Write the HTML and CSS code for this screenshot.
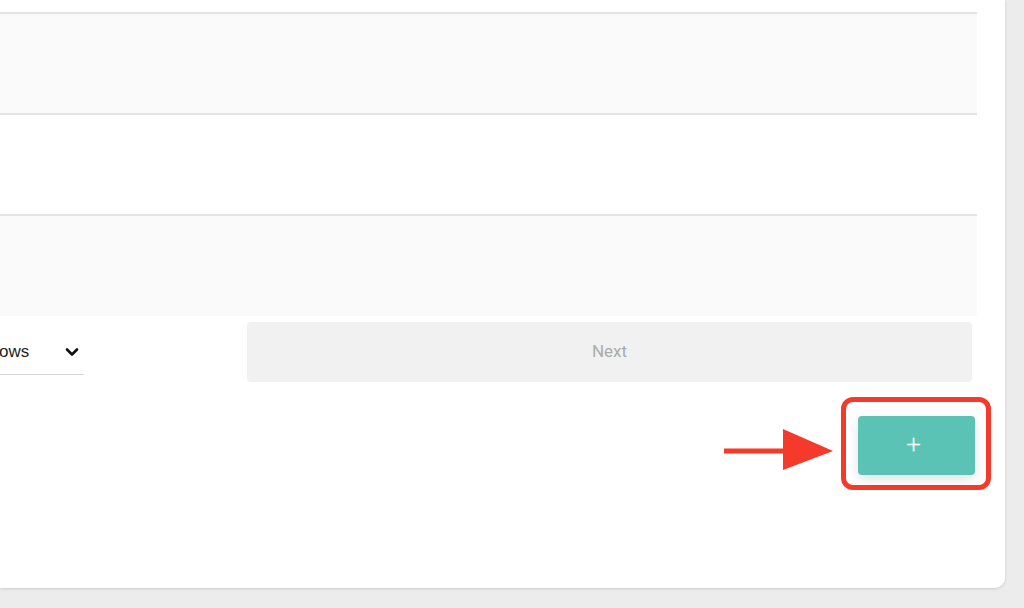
FILE: index.html
```html
<!DOCTYPE html>
<html lang="en">
<head>
<meta charset="utf-8">
<title>Table</title>
<link rel="stylesheet" href="styles.css">
</head>
<body>
<div class="card">
  <div class="table">
    <div class="row shaded"></div>
    <div class="row"></div>
    <div class="row shaded"></div>
  </div>
  <div class="pager">
    <div class="select">
      <span class="select-label">ows</span>
      <svg class="chev" width="14" height="10" viewBox="0 0 14 10"><path d="M2 2.5 L7 7.5 L12 2.5" fill="none" stroke="#111" stroke-width="2.6" stroke-linecap="round" stroke-linejoin="round"/></svg>
    </div>
    <button class="next">Next</button>
  </div>
  <div class="actions">
    <button class="add">+</button>
  </div>
</div>
<div class="highlight"></div>
<svg class="arrow" width="112" height="44" viewBox="0 0 112 44"><rect x="0" y="19.5" width="66" height="5" fill="#f5392b"/><polygon points="59,0 109,22 59,41" fill="#f5392b"/></svg>
</body>
</html>
```

FILE: styles.css
```css
html, body {
  margin: 0;
  padding: 0;
}
body {
  background: #ececec;
  width: 1024px;
  height: 608px;
  overflow: hidden;
  position: relative;
  font-family: Inter, "Noto Sans", sans-serif;
}
.card {
  width: 1005px;
  height: 588px;
  background: #fff;
  border-radius: 0 0 10px 0;
  box-shadow: 0 1px 3px rgba(0,0,0,0.14);
  overflow: hidden;
  display: flex;
  flex-direction: column;
}
.table {
  width: 977px;
  margin-top: 12px;
  display: flex;
  flex-direction: column;
}
.row {
  height: 99px;
  border-top: 2px solid #e3e3e3;
  background: #fff;
}
.row.shaded {
  background: #fafafa;
}
.row:last-child {
  height: 100px;
}
.pager {
  display: flex;
  align-items: center;
  margin-top: 6px;
}
.select {
  width: 84px;
  height: 45px;
  border-bottom: 1px solid #d6d6d6;
  display: flex;
  align-items: center;
  justify-content: space-between;
  box-sizing: border-box;
  padding-right: 5px;
}
.select-label {
  font-family: "Liberation Sans", Arial, sans-serif;
  font-size: 17px;
  color: #1e1e1e;
  margin-left: -1px;
  margin-top: 0;
}
.chev {
  display: block;
}
.next {
  margin-left: 163px;
  width: 725px;
  height: 60px;
  border: none;
  border-radius: 4px;
  background: #f1f1f1;
  color: #ababab;
  font-family: Roboto, Inter, sans-serif;
  font-size: 17px;
  padding: 0 0 3px;
  margin-top: 0;
}
.actions {
  display: flex;
  justify-content: flex-end;
  padding-right: 30px;
  margin-top: 34px;
}
.add {
  width: 117px;
  height: 59px;
  border: none;
  border-radius: 4px;
  background: #5bc3b5;
  color: #fff;
  font-family: Roboto, sans-serif;
  font-size: 26px;
  font-weight: 300;
  padding: 0 6px 3px 0;
  box-shadow: 0 4px 12px rgba(0,0,0,0.12);
}
.highlight {
  position: absolute;
  left: 841px;
  top: 397px;
  width: 150px;
  height: 93px;
  box-sizing: border-box;
  border: 5px solid #f5392b;
  border-radius: 12px;
}
.arrow {
  position: absolute;
  left: 724px;
  top: 429px;
}
```
